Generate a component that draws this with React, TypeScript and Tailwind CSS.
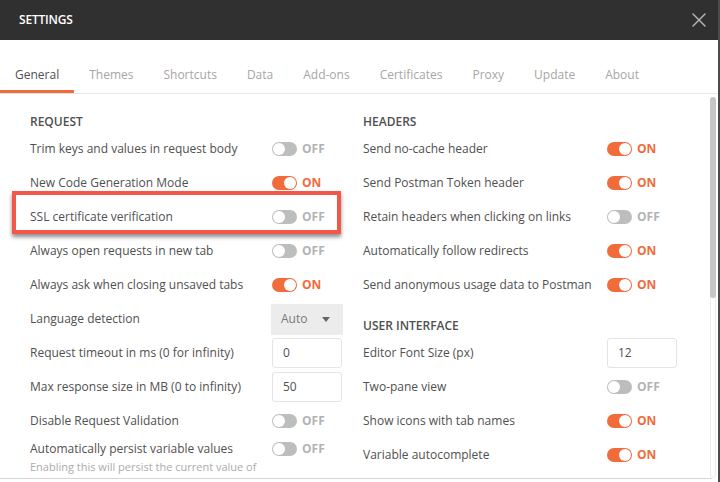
import { X } from "lucide-react"

type Ctl =
  | { kind: "toggle"; on: boolean }
  | { kind: "select"; value: string }
  | { kind: "input"; value: string }
  | { kind: "peek" }

type Row = { label: string; ctl: Ctl; desc?: string }

const tabs = ["General", "Themes", "Shortcuts", "Data", "Add-ons", "Certificates", "Proxy", "Update", "About"]

const requestRows: Row[] = [
  { label: "Trim keys and values in request body", ctl: { kind: "toggle", on: false } },
  { label: "New Code Generation Mode", ctl: { kind: "toggle", on: true } },
  { label: "SSL certificate verification", ctl: { kind: "toggle", on: false } },
  { label: "Always open requests in new tab", ctl: { kind: "toggle", on: false } },
  { label: "Always ask when closing unsaved tabs", ctl: { kind: "toggle", on: true } },
  { label: "Language detection", ctl: { kind: "select", value: "Auto" } },
  { label: "Request timeout in ms (0 for infinity)", ctl: { kind: "input", value: "0" } },
  { label: "Max response size in MB (0 to infinity)", ctl: { kind: "input", value: "50" } },
  { label: "Disable Request Validation", ctl: { kind: "toggle", on: false } },
]

const headerRows: Row[] = [
  { label: "Send no-cache header", ctl: { kind: "toggle", on: true } },
  { label: "Send Postman Token header", ctl: { kind: "toggle", on: true } },
  { label: "Retain headers when clicking on links", ctl: { kind: "toggle", on: false } },
  { label: "Automatically follow redirects", ctl: { kind: "toggle", on: true } },
  { label: "Send anonymous usage data to Postman", ctl: { kind: "toggle", on: true } },
]

const uiRows: Row[] = [
  { label: "Editor Font Size (px)", ctl: { kind: "input", value: "12" } },
  { label: "Two-pane view", ctl: { kind: "toggle", on: false } },
  { label: "Show icons with tab names", ctl: { kind: "toggle", on: true } },
  { label: "Variable autocomplete", ctl: { kind: "toggle", on: true } },
  { label: "", ctl: { kind: "peek" } },
]

function Track({ on }: { on: boolean }) {
  return on ? (
    <div className="w-[25px] h-[14px] rounded-full bg-[#f26b3a] flex items-center justify-end pr-[1px]">
      <div className="w-[12px] h-[12px] rounded-full bg-white" />
    </div>
  ) : (
    <div className="w-[25px] h-[14px] rounded-full bg-[#bdbdbd] flex items-center pl-[1px]">
      <div className="w-[12px] h-[12px] rounded-full bg-white" />
    </div>
  )
}

function Toggle({ on }: { on: boolean }) {
  return (
    <div className="flex items-center">
      <Track on={on} />
      <span className={"ml-[5px] text-[12px] font-bold leading-[14px] " + (on ? "text-[#f26b3a]" : "text-[#b3b3b3]")}>
        {on ? "ON" : "OFF"}
      </span>
    </div>
  )
}

function Control({ ctl }: { ctl: Ctl }) {
  if (ctl.kind === "peek") return <Track on />
  if (ctl.kind === "toggle") return <Toggle on={ctl.on} />
  if (ctl.kind === "select")
    return (
      <div className="w-[72px] h-[31px] -ml-[1px] bg-[#ececec] flex items-center justify-between pl-[10px] pr-[13px] text-[12px] text-[#7a7a7a]">
        <span>{ctl.value}</span>
        <svg width="8" height="5" viewBox="0 0 8 5">
          <path d="M0 0h8L4 5z" fill="#666" />
        </svg>
      </div>
    )
  return (
    <div className="w-[70px] h-[30px] border border-[#e4e4e4] rounded-[3px] flex items-center px-[10px] text-[12px] text-[#505050]">
      {ctl.value}
    </div>
  )
}

function SettingRow({ row, labelW }: { row: Row; labelW: string }) {
  if (row.desc)
    return (
      <div className="pt-[2px]">
        <div className="flex items-center h-[18px]">
          <div className={labelW + " text-[12px] text-[#505050]"}>{row.label}</div>
          <Control ctl={row.ctl} />
        </div>
        <div className="text-[11px] leading-[18px] text-[#ababab]">{row.desc}</div>
      </div>
    )
  return (
    <div className="flex items-center h-[34px]">
      <div className={labelW + " text-[12px] text-[#505050] whitespace-nowrap"}>{row.label}</div>
      <Control ctl={row.ctl} />
    </div>
  )
}

function Heading({ children, className = "" }: { children: string; className?: string }) {
  return <div className={"h-[20px] leading-[20px] text-[12px] font-semibold text-[#505050] " + className}>{children}</div>
}

export default function App() {
  return (
    <div
      className="relative w-[720px] h-[482px] overflow-hidden bg-white border-r-2 border-[#4b4b4b]"
      style={{ fontFamily: '"Open Sans", "Liberation Sans", sans-serif' }}
    >
      <div className="h-[40px] bg-[#303030] flex items-center justify-between pl-[19px] pr-[7px]">
        <span className="text-[12px] font-semibold text-white tracking-[-0.2px]">SETTINGS</span>
        <X size={24} strokeWidth={1.4} className="text-[#b5b5b5]" />
      </div>

      <div className="h-[54px] flex border-b border-[#e6e6e6]">
        {tabs.map((t, i) => (
          <div
            key={t}
            className={
              "h-[53px] px-[15px] flex items-end pb-[6px] border-b-[3px] text-[12px] leading-[18px] " +
              (i === 0 ? "border-[#f26b3a] text-[#505050]" : "border-transparent text-[#a6a6a6]")
            }
          >
            {t}
          </div>
        ))}
      </div>

      <div className="flex pt-[18px] pl-[30px]">
        <div className="w-[333px]">
          <Heading>REQUEST</Heading>
          {requestRows.map((r) => (
            <SettingRow key={r.label} row={r} labelW="w-[242px]" />
          ))}
          <SettingRow
            row={{
              label: "Automatically persist variable values",
              ctl: { kind: "toggle", on: false },
              desc: "Enabling this will persist the current value of",
            }}
            labelW="w-[242px]"
          />
        </div>
        <div className="w-[320px]">
          <Heading>HEADERS</Heading>
          {headerRows.map((r) => (
            <SettingRow key={r.label} row={r} labelW="w-[244px]" />
          ))}
          <Heading className="mt-[14px]">USER INTERFACE</Heading>
          {uiRows.map((r, i) => (
            <SettingRow key={i} row={r} labelW="w-[244px]" />
          ))}
        </div>
      </div>

      {/* scrollbar */}
      <div className="absolute left-[710px] top-[97px] w-[6px] h-[381px] rounded-full border border-[#ececec]">
        <div className="w-[6px] h-[201px] -ml-[1px] -mt-[1px] rounded-full bg-[#c6c6c6]" />
      </div>

      {/* bottom edge line */}
      <div className="absolute left-0 top-[478px] w-[712px] h-[1px] bg-[#d6d6d6]" />

      {/* highlight annotation */}
      <div className="absolute left-[12px] top-[191px] w-[329px] h-[43px] border-4 border-[#f2574a] shadow-[0_3px_4px_rgba(0,0,0,0.45)]" />
    </div>
  )
}
